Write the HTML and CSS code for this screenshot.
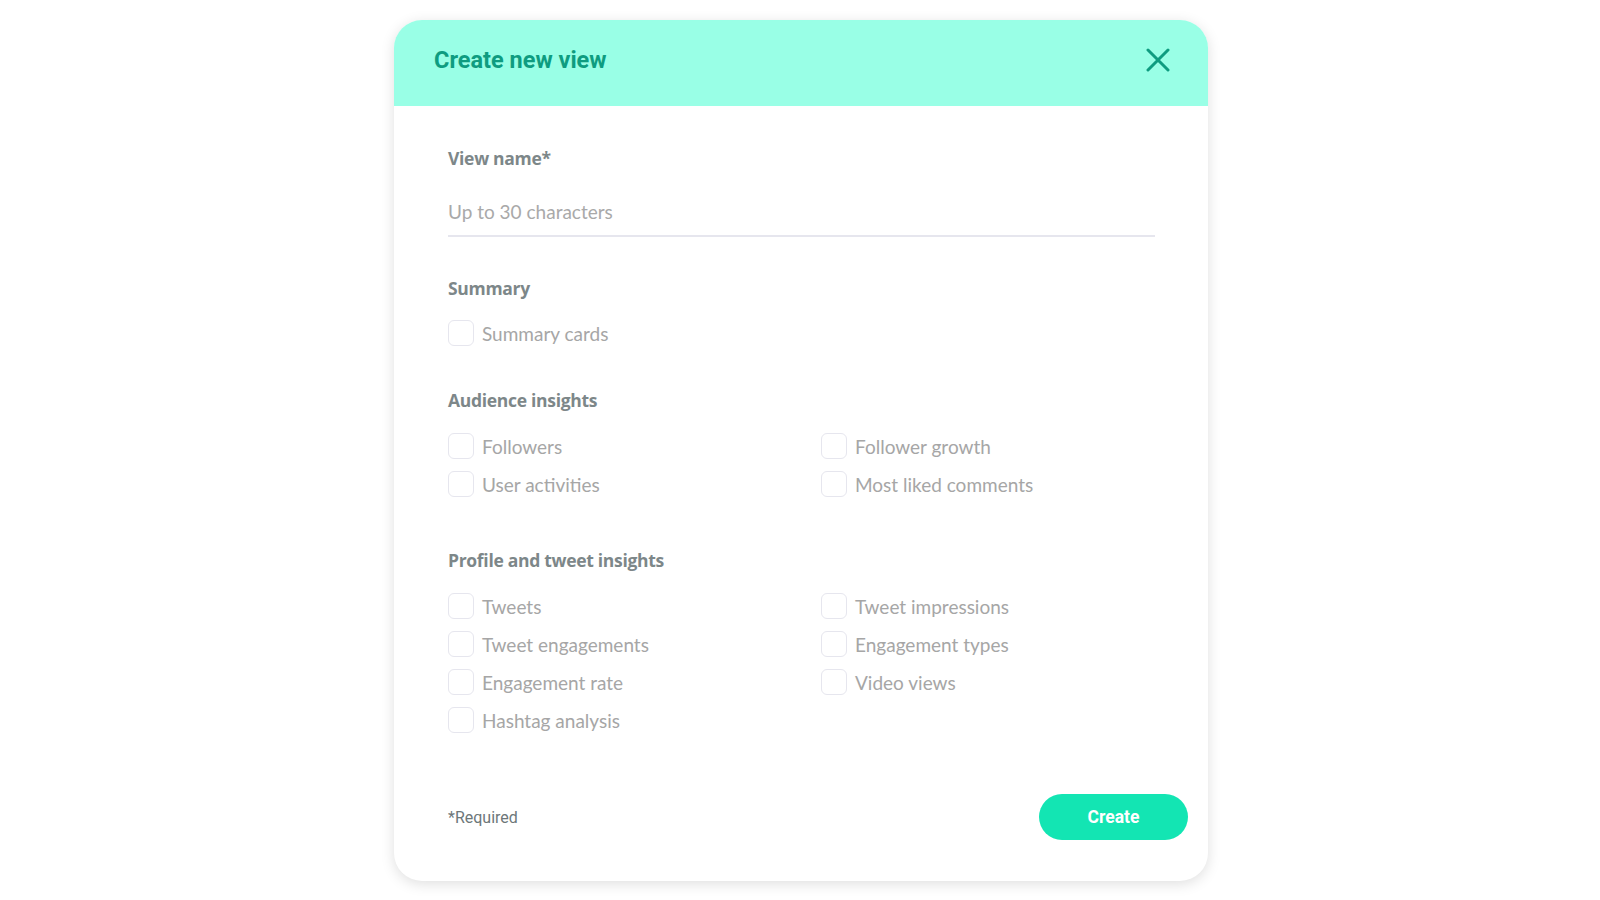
FILE: index.html
```html
<!DOCTYPE html>
<html lang="en">
<head>
  <meta charset="UTF-8">
  <meta name="viewport" content="width=device-width, initial-scale=1.0">
  <title>Create new view</title>
  <link rel="stylesheet" href="styles.css">
</head>
<body>

  <div class="modal">
    <div class="modal-header">
      <h2>Create new view</h2>
      <button class="close" aria-label="Close">
        <svg width="24" height="24" viewBox="0 0 24 24"><path d="M2 2 L22 22 M22 2 L2 22" stroke="#0e9c80" stroke-width="3" stroke-linecap="round" fill="none"/></svg>
      </button>
    </div>

    <div class="modal-body">
      <label class="field-label">View name*</label>
      <input class="name-input" type="text" placeholder="Up to 30 characters">

      <div class="section section-summary">
        <h3>Summary</h3>
        <div class="options">
          <label class="option"><span class="box"></span>Summary cards</label>
        </div>
      </div>

      <div class="section section-audience">
        <h3>Audience insights</h3>
        <div class="options">
          <label class="option"><span class="box"></span>Followers</label>
          <label class="option"><span class="box"></span>Follower growth</label>
          <label class="option"><span class="box"></span>User activities</label>
          <label class="option"><span class="box"></span>Most liked comments</label>
        </div>
      </div>

      <div class="section section-profile">
        <h3>Profile and tweet insights</h3>
        <div class="options">
          <label class="option"><span class="box"></span>Tweets</label>
          <label class="option"><span class="box"></span>Tweet impressions</label>
          <label class="option"><span class="box"></span>Tweet engagements</label>
          <label class="option"><span class="box"></span>Engagement types</label>
          <label class="option"><span class="box"></span>Engagement rate</label>
          <label class="option"><span class="box"></span>Video views</label>
          <label class="option"><span class="box"></span>Hashtag analysis</label>
        </div>
      </div>
    </div>

    <div class="modal-footer">
      <span class="required">*Required</span>
      <button class="create">Create</button>
    </div>
  </div>

</body>
</html>
```

FILE: styles.css
```css
* {
  box-sizing: border-box;
  margin: 0;
  padding: 0;
}

body {
  background-color: #fff;
  font-family: Lato, "Open Sans", sans-serif;
  display: flex;
  justify-content: center;
  padding-top: 20px;
  height: 100vh;
}

.modal {
  width: 814px;
  height: 861px;
  margin-left: 2px;
  background-color: #fff;
  border-radius: 28px;
  overflow: hidden;
  box-shadow: 0 3px 14px rgba(0, 0, 0, 0.13);
  display: flex;
  flex-direction: column;
}

.modal-header {
  height: 86px;
  background-color: #99ffe6;
  display: flex;
  align-items: center;
  justify-content: space-between;
  padding: 0 38px 6px 40px;
}

.modal-header h2 {
  font-family: Roboto, sans-serif;
  font-size: 23.5px;
  font-weight: 700;
  color: #0e9c80;
}

.close {
  background: none;
  border: none;
  width: 24px;
  height: 24px;
  cursor: pointer;
}

.close svg {
  display: block;
}

.modal-body {
  flex: 1;
  padding: 40px 53px 0 54px;
}

.field-label,
.section h3 {
  display: block;
  font-family: "Open Sans", sans-serif;
  font-size: 17.5px;
  line-height: 24px;
  font-weight: 700;
  color: #7d8789;
  letter-spacing: -0.3px;
}

.name-input {
  display: block;
  width: 100%;
  margin-top: 20px;
  padding: 10px 0 11px;
  border: none;
  border-bottom: 2px solid #e6e6ee;
  font-family: inherit;
  font-size: 19px;
  line-height: 24px;
  color: #555;
  outline: none;
}

.name-input::placeholder {
  color: #a9a9a9;
}

.section-summary {
  margin-top: 39px;
}

.section-audience {
  margin-top: 42px;
}

.section-profile {
  margin-top: 51px;
}

.options {
  margin-top: 21px;
  display: grid;
  grid-template-columns: 373px 1fr;
  row-gap: 12px;
}

.section-summary .options {
  margin-top: 20px;
}

.option {
  display: flex;
  align-items: center;
  gap: 8px;
  height: 26px;
  font-size: 19px;
  color: #a6a6a6;
  cursor: pointer;
}

.box {
  width: 26px;
  height: 26px;
  border: 1.5px solid #e6e6ee;
  border-radius: 6px;
  flex-shrink: 0;
}

.modal-footer {
  display: flex;
  align-items: center;
  justify-content: space-between;
  padding: 0 20px 41px 54px;
}

.required {
  font-family: Roboto, sans-serif;
  font-size: 16px;
  color: #6d7779;
}

.create {
  width: 149px;
  height: 46px;
  border: none;
  border-radius: 23px;
  background-color: #13e5b3;
  color: #fff;
  font-family: Roboto, sans-serif;
  font-size: 17.5px;
  font-weight: 700;
  cursor: pointer;
}
```
